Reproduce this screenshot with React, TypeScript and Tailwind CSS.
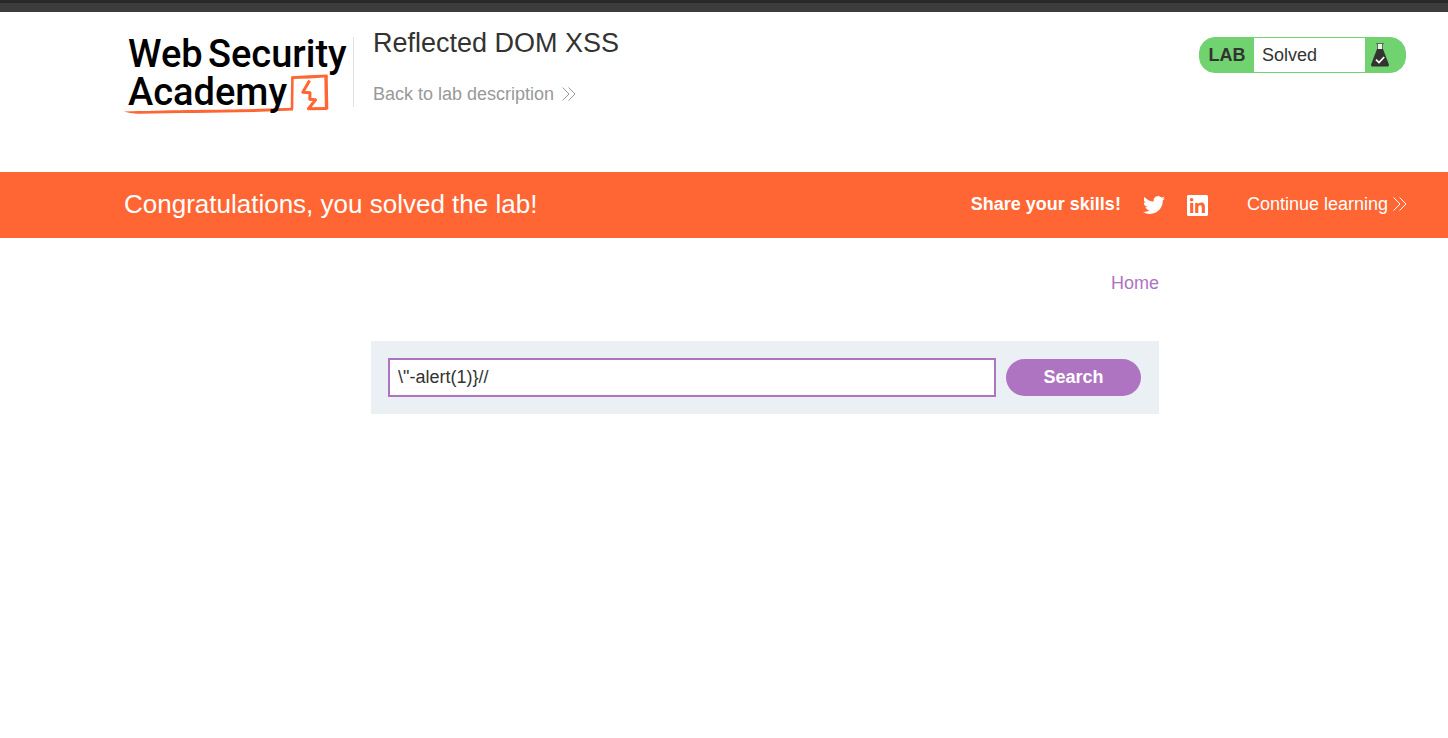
import React from "react";

function DoubleChevron() {
  return (
    <svg width="14" height="14" viewBox="0 0 14 14" fill="none" stroke="currentColor" strokeWidth="1" aria-hidden="true">
      <path d="M0.6 0.5 L7 7 L0.6 13.5" />
      <path d="M6.6 0.5 L13 7 L6.6 13.5" />
    </svg>
  );
}

function AcademyLogo() {
  return (
    <svg width="226" height="88" viewBox="0 -4 226 88" role="img" aria-label="Web Security Academy">
      <path d="M0 75.6 C40 74 90 73.8 124 73.2 L169 71.8 L169 74.6 L130 76 C90 76.8 50 77 16 77.8 C8 77.8 4 76.8 0 75.6 Z" fill="#ff6633" />
      <path d="M168 73.2 L168.4 41.4" fill="none" stroke="#ff6633" strokeWidth="2.6" />
      <path d="M167.2 40.2 Q185 39.2 203.4 38.4 L203.6 41.2 Q186 42.8 167.2 43 Z" fill="#ff6633" />
      <path d="M202 39.6 L202.6 73" fill="none" stroke="#ff6633" strokeWidth="3.4" />
      <path
        d="M203.4 72.6 L184.4 72.8 L191.6 63.8 L185.8 63.2 L186 56.8 L178.8 56.2 L185.6 44.4"
        fill="none"
        stroke="#ff6633"
        strokeWidth="3"
        strokeLinejoin="round"
      />
      <g className="fill-black font-['Roboto',sans-serif] text-[38px] font-medium">
        <text x="4" y="31">Web</text>
        <text x="84" y="31">Security</text>
        <text x="4" y="69">Academy</text>
      </g>
    </svg>
  );
}

function FlaskIcon() {
  return (
    <svg width="20" height="24" viewBox="0 0 20 24" aria-hidden="true">
      <path d="M6 0.5 H14 M7.5 1 V8 M12.5 1 V8" stroke="#666" strokeWidth="1" fill="none" />
      <path d="M8 1 H12 V6 H8 Z" fill="#e4f5e2" />
      <path d="M7 6 H13 L18.8 21.2 Q19.4 23.5 17 23.5 H3 Q0.6 23.5 1.2 21.2 Z" fill="#333332" />
      <path d="M6 16.6 L9 19.5 L14.2 14" fill="none" stroke="#fff" strokeWidth="1.7" />
    </svg>
  );
}

function TwitterIcon() {
  return (
    <svg width="22" height="22" viewBox="0 0 24 24" fill="currentColor" aria-hidden="true">
      <path d="M23.953 4.57a10 10 0 01-2.825.775 4.958 4.958 0 002.163-2.723c-.951.555-2.005.959-3.127 1.184a4.92 4.92 0 00-8.384 4.482C7.69 8.095 4.067 6.13 1.64 3.162a4.822 4.822 0 00-.666 2.475c0 1.71.87 3.213 2.188 4.096a4.904 4.904 0 01-2.228-.616v.06a4.923 4.923 0 003.946 4.827 4.996 4.996 0 01-2.212.085 4.936 4.936 0 004.604 3.417 9.867 9.867 0 01-6.102 2.105c-.39 0-.779-.023-1.17-.067a13.995 13.995 0 007.557 2.209c9.053 0 13.998-7.496 13.998-13.985 0-.21 0-.42-.015-.63A9.935 9.935 0 0024 4.59z" />
    </svg>
  );
}

function LinkedInIcon() {
  return (
    <svg width="21" height="21" viewBox="0 0 24 24" fill="currentColor" aria-hidden="true">
      <path d="M20.447 20.452h-3.554v-5.569c0-1.328-.027-3.037-1.852-3.037-1.853 0-2.136 1.445-2.136 2.939v5.667H9.351V9h3.414v1.561h.046c.477-.9 1.637-1.85 3.37-1.85 3.601 0 4.267 2.37 4.267 5.455v6.286zM5.337 7.433a2.062 2.062 0 01-2.063-2.065 2.064 2.064 0 112.063 2.065zm1.782 13.019H3.555V9h3.564v11.452zM22.225 0H1.771C.792 0 0 .774 0 1.729v20.542C0 23.227.792 24 1.771 24h20.451C23.2 24 24 23.227 24 22.271V1.729C24 .774 23.2 0 22.222 0h.003z" />
    </svg>
  );
}

export default function App() {
  return (
    <div className="min-h-screen bg-white font-['Liberation_Sans',Arial,sans-serif] text-lg leading-6 text-[#333332]">
      <div className="h-3 border-t-[3px] border-[#282828] bg-[#3c3c3c]" />

      <header className="flex h-40 items-start pr-[42px] pl-[124px]">
        <a href="#academy" className="shrink-0 pt-5">
          <AcademyLogo />
        </a>
        <div className="mt-[25px] ml-[3px] flex h-[70px] flex-col justify-between border-l border-[#e0e0e0] pl-[19px]">
          <h1 className="-mt-3 text-[27px] leading-9">Reflected DOM XSS</h1>
          <a href="#description" className="flex items-center gap-2 pb-px text-[#999]">
            Back to lab description
            <DoubleChevron />
          </a>
        </div>
        <div className="mt-[25px] ml-auto flex h-9 w-[207px] items-stretch overflow-hidden rounded-2xl border border-[#71d36f] bg-[#71d36f]">
          <span className="flex w-[54px] items-center justify-center font-bold">LAB</span>
          <p className="flex flex-1 items-center bg-white pl-2">Solved</p>
          <span className="flex w-10 items-center pl-[5px]">
            <FlaskIcon />
          </span>
        </div>
      </header>

      <section className="flex h-[66px] items-center bg-[#ff6633] pr-[41px] pb-0.5 pl-[124px] text-white">
        <h2 className="text-[26px] leading-8">Congratulations, you solved the lab!</h2>
        <div className="ml-auto flex items-center">
          <span className="font-bold">Share your skills!</span>
          <a href="#twitter" aria-label="Share on Twitter" className="ml-[22px] pt-0.5">
            <TwitterIcon />
          </a>
          <a href="#linkedin" aria-label="Share on LinkedIn" className="ml-[22px] pt-0.5">
            <LinkedInIcon />
          </a>
          <a href="#continue" className="ml-[39px] flex items-center gap-[5px]">
            Continue learning
            <DoubleChevron />
          </a>
        </div>
      </section>

      <main className="ml-[371px] max-w-[788px] pt-[33px]">
        <nav className="flex justify-end">
          <a href="#home" className="text-[#ae74c2]">Home</a>
        </nav>
        <form className="mt-[46px] flex items-center gap-2.5 bg-[#eaf0f3] py-[17px] pr-[18px] pl-[17px]" onSubmit={(e) => e.preventDefault()}>
          <input
            type="text"
            name="search"
            aria-label="Search the blog"
            defaultValue={'\\"-alert(1)}//'}
            className="h-[39px] min-w-0 flex-1 border-2 border-[#ae74c2] bg-white px-2 outline-none"
          />
          <button type="submit" className="h-[37px] w-[135px] rounded-full bg-[#ae74c2] pb-0.5 font-bold text-white">
            Search
          </button>
        </form>
      </main>
    </div>
  );
}
